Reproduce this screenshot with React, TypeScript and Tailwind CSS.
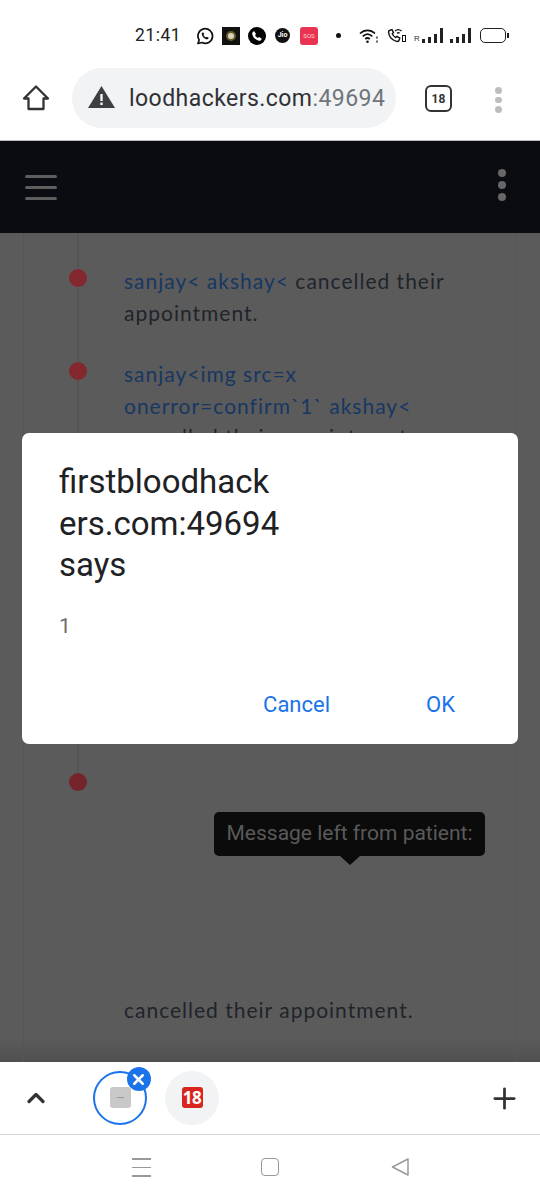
import { ChevronUp, Plus, X } from "lucide-react";
import type { ReactNode } from "react";

function Bars() {
  const heights = [4, 6, 9, 15];
  return (
    <div className="flex items-end gap-[3px]">
      {heights.map((h, i) => (
        <div key={i} className="w-[3px] bg-[#222]" style={{ height: h }} />
      ))}
    </div>
  );
}

function StatusBar() {
  return (
    <div className="h-[60px] bg-white flex items-center pl-[135px] pt-[11px] font-['Roboto',sans-serif]">
      <span className="text-[17.5px] leading-none tracking-[0.5px] text-[#222] w-[61px]">21:41</span>
      <svg width="18" height="18" viewBox="0 0 18 18" fill="none">
        <path d="M2 16.500l1.100-3.600A7.300 7.300 0 1 1 6 15.500z" stroke="#111" strokeWidth="1.700" fill="#fff" strokeLinejoin="round" />
        <path d="M6.400 5.600c-.9.800-.8 2.200.3 3.800 1.200 1.700 2.800 2.900 4.300 2.900 1 0 1.700-.7 1.700-1.500l-1.900-1-.8.800c-1-.4-2-1.400-2.500-2.500l.7-.8-.8-1.900z" fill="#111" />
      </svg>
      <div className="ml-[8px] w-[18px] h-[18px] bg-[#111] flex items-center justify-center">
        <div className="w-[10px] h-[10px] rounded-full bg-[#d8d4c0] border-2 border-[#6b5a2a]" />
      </div>
      <div className="ml-[8px] w-[18px] h-[18px] rounded-full bg-black flex items-center justify-center">
        <svg width="12" height="12" viewBox="0 0 24 24" fill="#fff">
          <path d="M6.600 2.500 10 7.800 8 10.500c1.200 2.500 3 4.300 5.500 5.500l2.700-2 5.300 3.400c-.6 2.800-2.800 4.600-5.500 4.100C9 20.300 3.700 15 2.500 8c-.4-2.700 1.300-4.900 4.100-5.500z" />
        </svg>
      </div>
      <div className="ml-[9px] w-[15px] h-[15px] rounded-full bg-[#111] flex items-center justify-center text-white text-[7px] font-bold leading-none">
        Jio
      </div>
      <div className="ml-[10px] w-[18px] h-[18px] rounded-[3px] bg-[#ea3350] flex items-center justify-center text-[#ffd5dc] text-[6px] leading-none">
        SOS
      </div>
      <div className="ml-[18px] w-[5px] h-[5px] rounded-full bg-[#111]" />
      <svg className="ml-[18px]" width="20" height="16" viewBox="0 0 20 16" fill="none" stroke="#111" strokeWidth="1.700">
        <path d="M1 5.500c4.500-4.300 10.500-4.300 15 0M3.700 8.300c3-2.800 6.600-2.800 9.600 0M6.200 11c1.500-1.300 3.100-1.300 4.600 0" />
        <circle cx="8.500" cy="13.800" r="1.300" fill="#111" stroke="none" />
        <path d="M18 8.500v2M18 12.500v2" strokeWidth="1.300" />
      </svg>
      <svg className="ml-[8px]" width="20" height="17" viewBox="0 0 20 17" fill="none" stroke="#111" strokeWidth="1.400">
        <path d="M2.500 3.500 5 2.600l1.500 3-1.300 1.200c.8 1.700 1.900 2.900 3.500 3.700L10 9.400l2.800 1.700-.9 2.600c-.5.900-1.800 1-3 .5C4.800 12.700 1.800 8.900 1.600 5c0-.6.300-1.200.9-1.500z" />
        <path d="M8 4c2-1.700 4.500-1.700 6.500 0M10 6.200c.9-.7 1.700-.7 2.600 0" />
        <rect x="15.500" y="8.500" width="3" height="6" strokeWidth="1" />
      </svg>
      <div className="ml-[7px] flex items-end">
        <span className="w-[8px] text-[8px] leading-none text-[#333] font-['Liberation_Sans',sans-serif]">R</span>
        <Bars />
      </div>
      <div className="ml-[7px]">
        <Bars />
      </div>
      <div className="ml-[9px] flex items-center">
        <div className="w-[26px] h-[15px] rounded-[5px] border-[1.5px] border-[#222]" />
        <div className="w-[1.5px] h-[5px] bg-[#222] ml-[1px]" />
      </div>
    </div>
  );
}

function Toolbar() {
  return (
    <div className="h-[81px] bg-white border-b border-[#bdbdbd] flex items-start pt-[8px] font-['Roboto',sans-serif]">
      <div className="w-[72px] h-[60px] flex items-center justify-center">
        <svg width="28" height="28" viewBox="0 0 28 28" fill="none" stroke="#333" strokeWidth="2.300" strokeLinejoin="round">
          <path d="M14 2.500 2 14.500h4.500v10.500h15V14.500H26z" />
        </svg>
      </div>
      <div className="w-[324px] h-[60px] rounded-full bg-[#f1f3f4] flex items-center pl-[16px] overflow-hidden">
        <svg width="27" height="22" viewBox="0 0 27 22" className="shrink-0 -mt-[2px]">
          <path d="M13.500 0 27 22H0z" fill="#3c4043" />
          <rect x="12.300" y="8" width="2.400" height="7" fill="#f1f3f4" />
          <rect x="12.300" y="16.500" width="2.400" height="2.500" fill="#f1f3f4" />
        </svg>
        <span className="ml-[14px] text-[23px] leading-none whitespace-nowrap text-[#303134] tracking-[0.45px]">
          loodhackers.com<span className="text-[#70757a]">:49694</span>
        </span>
      </div>
      <div className="ml-[29px] w-[27px] h-[27px] mt-[17px] rounded-[6px] border-[2.5px] border-[#333] flex items-center justify-center text-[12px] font-bold text-[#333] leading-none">
        18
      </div>
      <div className="ml-[43px] mt-[19px] flex flex-col gap-[3px]">
        <div className="w-[6.5px] h-[6.5px] rounded-full bg-[#bdbdbd]" />
        <div className="w-[6.5px] h-[6.5px] rounded-full bg-[#bdbdbd]" />
        <div className="w-[6.5px] h-[6.5px] rounded-full bg-[#bdbdbd]" />
      </div>
    </div>
  );
}

function SiteHeader() {
  return (
    <div className="h-[92px] bg-[#0a0c12] flex items-center justify-between pl-[25px] pr-[34px]">
      <div className="flex flex-col gap-[8px]">
        <div className="w-[32px] h-[3px] bg-[#5e5e5e] rounded-sm" />
        <div className="w-[32px] h-[3px] bg-[#5e5e5e] rounded-sm" />
        <div className="w-[32px] h-[3px] bg-[#5e5e5e] rounded-sm" />
      </div>
      <div className="flex flex-col gap-[4px] -mt-[4px]">
        <div className="w-[8px] h-[8px] rounded-full bg-[#666]" />
        <div className="w-[8px] h-[8px] rounded-full bg-[#666]" />
        <div className="w-[8px] h-[8px] rounded-full bg-[#666]" />
      </div>
    </div>
  );
}

function TimelineItem({ className, children }: { className?: string; children: ReactNode }) {
  return (
    <div className={"flex " + (className ?? "")}>
      <div className="w-[124px] shrink-0 pl-[69px] pt-[4px]">
        <div className="w-[18px] h-[18px] rounded-full bg-[#82282e]" />
      </div>
      <p className="w-[335px] text-[21px] leading-[31.5px] tracking-[1px] text-[#20242b]">{children}</p>
    </div>
  );
}

function Page() {
  return (
    <div className="relative flex-1 bg-[#5b5b5b] overflow-hidden font-['Lato',sans-serif]">
      <div className="absolute left-0 right-0 bottom-0 h-[24px] bg-gradient-to-b from-[#5b5b5b] to-[#505050]" />
      {/* card edges and timeline rail */}
      <div className="absolute top-0 bottom-0 left-[23px] w-px bg-[#555]" />
      <div className="absolute top-0 bottom-0 left-[515px] w-px bg-[#575757]" />
      <div className="absolute top-0 h-[540px] left-[77px] w-[2px] bg-[#555]" />
      <div className="relative pt-[32px]">
        <TimelineItem>
          <span className="text-[#173763]">sanjay&lt; akshay&lt;</span> <span>cancelled their appointment.</span>
        </TimelineItem>
        <TimelineItem className="mt-[30px]">
          <span className="text-[#173763]">sanjay&lt;img src=x onerror=confirm`1` akshay&lt;</span>{" "}
          <span>cancelled their appointment.</span>
        </TimelineItem>
        <div className="mt-[320px] pl-[69px]">
          <div className="w-[18px] h-[18px] rounded-full bg-[#74242a]" />
        </div>
        <div className="mt-[21px] ml-[214px] w-[271px] relative">
          <div className="h-[44px] rounded-[5px] bg-[#0b0b0b] flex items-center justify-center text-[21px] leading-none text-[#5a5a5a] font-['Roboto',sans-serif] whitespace-nowrap">
            Message left from patient:
          </div>
          <div className="absolute left-1/2 top-[44px] -ml-[10px] w-0 h-0 border-x-[10px] border-x-transparent border-t-[9px] border-t-[#0b0b0b]" />
        </div>
        <p className="mt-[138px] ml-[124px] text-[21px] leading-[31.5px] tracking-[1px] text-[#20242b]">
          cancelled their appointment.
        </p>
      </div>
    </div>
  );
}

function Dialog() {
  return (
    <div className="absolute left-[22px] top-[433px] w-[496px] h-[311px] rounded-[7px] bg-white font-['Roboto',sans-serif] flex flex-col pl-[37px] pr-[63px] pt-[28px]">
      <h2 className="text-[33px] leading-[41.5px] text-[#202124]">
        firstbloodhack
        <br />
        ers.com:49694
        <br />
        says
      </h2>
      <p className="mt-[26px] text-[21px] leading-[28px] text-[#6d6d6d]">1</p>
      <div className="mt-auto mb-[28px] flex justify-end gap-[96px] text-[22px] leading-none text-[#1a73e8]">
        <span>Cancel</span>
        <span>OK</span>
      </div>
    </div>
  );
}

function TabStrip() {
  return (
    <div className="h-[73px] bg-white border-b-[1.5px] border-[#d8d8d8] flex items-center pr-[19px]">
      <div className="w-[72px] flex justify-center">
        <ChevronUp size={28} strokeWidth={2.8} className="text-[#333]" />
      </div>
      <div className="relative ml-[21px] w-[54px] h-[54px] rounded-full border-[2.5px] border-[#1a73e8] flex items-center justify-center -mt-[1px]">
        <div className="w-[21px] h-[21px] rounded-[3px] bg-[#c8c8c8] flex items-center justify-center">
          <div className="w-[7px] h-[1px] bg-[#999]" />
        </div>
        <div className="absolute -right-[5.5px] -top-[5.5px] w-[24px] h-[24px] rounded-full bg-[#1a73e8] flex items-center justify-center">
          <X size={17} strokeWidth={3.5} className="text-white" />
        </div>
      </div>
      <div className="ml-[18px] w-[54px] h-[54px] rounded-full bg-[#f1f3f4] flex items-center justify-center -mt-[1px]">
        <div className="w-[21px] h-[21px] rounded-[3px] bg-[#d9251d] flex items-center justify-center text-white text-[17px] font-bold leading-none tracking-[-0.5px]">
          18
        </div>
      </div>
      <Plus size={33} strokeWidth={2} className="ml-auto text-[#333]" />
    </div>
  );
}

function NavBar() {
  return (
    <div className="h-[65px] bg-white flex items-start pt-[23px]">
      <div className="ml-[132px] w-[18.5px] flex flex-col gap-[7px]">
        <div className="h-[1.5px] bg-[#999]" />
        <div className="h-[1.5px] bg-[#999]" />
        <div className="h-[1.5px] bg-[#999]" />
      </div>
      <div className="ml-[110.5px] w-[18px] h-[18px] rounded-[4px] border-[1.5px] border-[#999]" />
      <svg className="ml-[112px]" width="18" height="18" viewBox="0 0 18 18" fill="none" stroke="#999" strokeWidth="1.500" strokeLinejoin="round">
        <path d="M17 1 1.500 9 17 17z" />
      </svg>
    </div>
  );
}

export default function App() {
  return (
    <div className="relative w-[540px] h-[1200px] flex flex-col overflow-hidden bg-white">
      <StatusBar />
      <Toolbar />
      <SiteHeader />
      <Page />
      <TabStrip />
      <NavBar />
      <Dialog />
    </div>
  );
}
